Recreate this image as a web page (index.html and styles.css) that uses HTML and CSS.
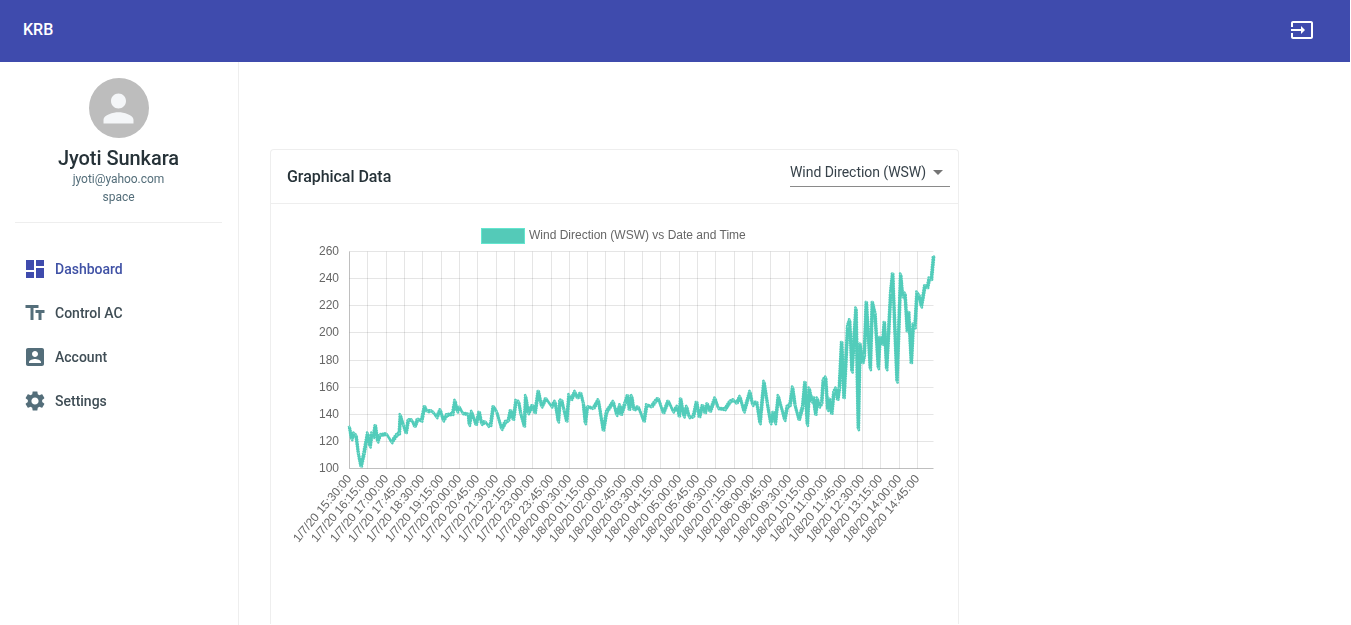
FILE: index.html
```html
<!DOCTYPE html>
<html>

<head lang="en">
    <meta charset="UTF-8">
    <title>KRB</title>
    <link rel="stylesheet" href="styles.css">
</head>

<body>

    <header class="topbar">
        <span class="brand">KRB</span>
        <svg class="topbar-icon" viewBox="0 0 24 24">
            <path d="M21 3.01H3c-1.1 0-2 .9-2 2V9h2V4.99h18v14.03H3V15H1v4.01c0 1.1.9 1.98 2 1.98h18c1.1 0 2-.88 2-1.98v-14c0-1.11-.9-2-2-2zM11 16l4-4-4-4v3H1v2h10v3z" />
        </svg>
    </header>

    <div class="layout">
        <aside class="sidebar">
            <div class="profile">
                <div class="avatar">
                    <svg viewBox="0 0 24 24">
                        <path d="M12 12c2.21 0 4-1.79 4-4s-1.79-4-4-4-4 1.79-4 4 1.79 4 4 4zm0 2c-2.67 0-8 1.34-8 4v2h16v-2c0-2.66-5.33-4-8-4z" />
                    </svg>
                </div>
                <div class="profile-name">Jyoti Sunkara</div>
                <div class="profile-line">jyoti@yahoo.com</div>
                <div class="profile-line">space</div>
            </div>

            <ul class="nav">
                <li class="nav-item nav-active">
                    <svg viewBox="0 0 24 24"><path d="M3 13h8V3H3v10zm0 8h8v-6H3v6zm10 0h8V11h-8v10zm0-18v6h8V3h-8z" /></svg>
                    <span>Dashboard</span>
                </li>
                <li class="nav-item">
                    <svg viewBox="0 0 24 24"><path d="M2.5 4v3h5v12h3V7h5V4h-13zm19 5h-9v3h3v7h3v-7h3V9z" /></svg>
                    <span>Control AC</span>
                </li>
                <li class="nav-item">
                    <svg viewBox="0 0 24 24"><path d="M3 5v14c0 1.1.89 2 2 2h14c1.1 0 2-.9 2-2V5c0-1.1-.9-2-2-2H5c-1.11 0-2 .9-2 2zm12 4c0 1.66-1.34 3-3 3s-3-1.34-3-3 1.34-3 3-3 3 1.34 3 3zm-9 8c0-2 4-3.1 6-3.1s6 1.1 6 3.1v1H6v-1z" /></svg>
                    <span>Account</span>
                </li>
                <li class="nav-item">
                    <svg viewBox="0 0 24 24"><path d="M19.14 12.94c.04-.3.06-.61.06-.94 0-.32-.02-.64-.07-.94l2.03-1.58c.18-.14.23-.41.12-.61l-1.92-3.32c-.12-.22-.37-.29-.59-.22l-2.39.96c-.5-.38-1.03-.7-1.62-.94l-.36-2.54c-.04-.24-.24-.41-.48-.41h-3.84c-.24 0-.43.17-.47.41l-.36 2.54c-.59.24-1.13.57-1.62.94l-2.39-.96c-.22-.08-.47 0-.59.22L2.74 8.87c-.12.21-.08.47.12.61l2.03 1.58c-.05.3-.09.63-.09.94s.02.64.07.94l-2.03 1.58c-.18.14-.23.41-.12.61l1.92 3.32c.12.22.37.29.59.22l2.39-.96c.5.38 1.03.7 1.62.94l.36 2.54c.05.24.24.41.48.41h3.84c.24 0 .44-.17.47-.41l.36-2.54c.59-.24 1.13-.56 1.62-.94l2.39.96c.22.08.47 0 .59-.22l1.92-3.32c.12-.22.07-.47-.12-.61l-2.01-1.58zM12 15.6c-1.98 0-3.6-1.62-3.6-3.6s1.62-3.6 3.6-3.6 3.6 1.62 3.6 3.6-1.62 3.6-3.6 3.6z" /></svg>
                    <span>Settings</span>
                </li>
            </ul>
        </aside>

        <main class="content">
            <section class="card">
                <div class="card-header">
                    <h2 class="card-title">Graphical Data</h2>
                    <div class="select">
                        <span>Wind Direction (WSW)</span>
                        <i class="select-caret"></i>
                    </div>
                </div>
                <div class="card-body">
                    <svg id="chart" class="chart" viewBox="271 204 687 421"></svg>
                </div>
            </section>
        </main>
    </div>

    <script src="chart.js"></script>
</body>

</html>
```
FILE: styles.css
```css
html,
body,
ul,
li,
h2 {
    padding: 0px;
    margin: 0px;
}

html,
body {
    height: 100%;
    overflow: hidden;
    background: #ffffff;
}

body {
    width: 1350px;
    font-family: Roboto, "Liberation Sans", sans-serif;
    color: #263238;
}

.topbar {
    height: 62px;
    background: #3f4bad;
    color: #ffffff;
    display: flex;
    align-items: center;
    justify-content: space-between;
    padding: 0px 36px 0px 23px;
}

.brand {
    font-size: 16px;
    font-weight: 500;
    margin-top: -3px;
}

.topbar-icon {
    width: 24px;
    height: 24px;
    fill: #ffffff;
    margin-top: -2px;
}

.layout {
    display: flex;
    height: 563px;
    will-change: transform;
}

.sidebar {
    width: 207px;
    flex: none;
    border-right: #eeeeee solid 1px;
    padding: 16px 16px 0px 15px;
}

.profile {
    display: flex;
    flex-direction: column;
    align-items: center;
    height: 144px;
    border-bottom: #eeeeee solid 1px;
}

.avatar {
    width: 60px;
    height: 60px;
    border-radius: 30px;
    background: #bdbdbd;
    display: flex;
    align-items: center;
    justify-content: center;
}

.avatar svg {
    width: 45px;
    height: 45px;
    fill: #f4f6f8;
}

.profile-name {
    font-size: 20px;
    font-weight: 500;
    line-height: 24px;
    letter-spacing: -0.06px;
    margin-top: 8px;
}

.profile-line {
    font-size: 12px;
    line-height: 18px;
    letter-spacing: -0.04px;
    color: #546e7a;
}

.nav {
    list-style: none;
    margin-top: 24px;
}

.nav-item {
    display: flex;
    align-items: center;
    height: 44px;
    padding-left: 8px;
    font-size: 14px;
    font-weight: 500;
    color: #3f4d55;
}

.nav-item svg {
    width: 24px;
    height: 24px;
    fill: #546e7a;
    margin-right: 8px;
}

.nav-active {
    color: #3f51a5;
}

.nav-active svg {
    fill: #3f4bad;
}

.content {
    flex: 1;
    padding: 87px 0px 0px 31px;
    min-width: 0;
}

.card {
    width: 687px;
    height: 474px;
    overflow: hidden;
    border: #eeeeee solid 1px;
    border-bottom: none;
    border-radius: 4px 4px 0px 0px;
}

.card-header {
    height: 53px;
    border-bottom: #eeeeee solid 1px;
    display: flex;
    justify-content: space-between;
    padding: 0px 8px 0px 16px;
}

.card-title {
    font-size: 16px;
    font-weight: 500;
    line-height: 53px;
    letter-spacing: -0.05px;
}

.select {
    width: 160px;
    height: 30px;
    margin-top: 7px;
    border-bottom: #8a8a8a solid 1px;
    display: flex;
    align-items: flex-start;
    justify-content: space-between;
    font-size: 14px;
    line-height: 18px;
    letter-spacing: -0.05px;
    color: #37424a;
    padding-top: 6px;
    box-sizing: border-box;
}

.select-caret {
    width: 0px;
    height: 0px;
    margin: 7px 7px 0px 0px;
    border-left: transparent solid 5px;
    border-right: transparent solid 5px;
    border-top: #757575 solid 5px;
}

.chart {
    display: block;
    width: 687px;
    height: 421px;
}

.chart text {
    font-family: "Liberation Sans", Arial, sans-serif;
    font-size: 12px;
    fill: #666666;
}

.grid-line {
    stroke: rgba(0, 0, 0, 0.1);
    stroke-width: 1;
}

.axis-line {
    stroke: rgba(0, 0, 0, 0.25);
    stroke-width: 1;
}

.legend-box {
    fill: #54cab8;
    stroke: #63e6cf;
    stroke-width: 1;
}

.data-line {
    fill: none;
    stroke: #52ccba;
    stroke-width: 2.6;
    stroke-linejoin: round;
}

.data-dot {
    fill: #8fdfd2;
}
```
FILE: chart.js
```js
// chart area, in page pixels
var left = 349.5, right = 933.5, top_ = 251.5, bottom = 468.5;
var stepX = 18.32;

var svg = document.getElementById('chart');
var NS = 'http://www.w3.org/2000/svg';

function add(tag, attrs, text) {
    var el = document.createElementNS(NS, tag);
    for (var k in attrs) {
        el.setAttribute(k, attrs[k]);
    }
    if (text) {
        el.textContent = text;
    }
    svg.appendChild(el);
    return el;
}

// tick labels every 45 minutes
var labels = [];
var mins = 15 * 60 + 30;
for (var i = 0; i < 32; i++) {
    var t = mins + i * 45;
    var day = t >= 1440 ? '1/8/20 ' : '1/7/20 ';
    t = t % 1440;
    var h = Math.floor(t / 60);
    var m = t % 60;
    labels.push(day + (h < 10 ? '0' : '') + h + ':' + (m < 10 ? '0' : '') + m + ':00');
}

// y axis, 100 to 260
for (var v = 100; v <= 260; v += 20) {
    var y = Math.round(bottom - (v - 100) / 160 * (bottom - top_) - 0.5) + 0.5;
    add('line', { x1: left, x2: right, y1: y, y2: y, 'class': v === 100 ? 'axis-line' : 'grid-line' });
    add('text', { x: 339, y: y + 3.5, 'text-anchor': 'end' }, String(v));
}

// x axis
labels.forEach(function (label, i) {
    var x = Math.round(left + i * stepX - 0.5) + 0.5;
    add('line', { x1: x, x2: x, y1: top_, y2: bottom, 'class': i === 0 ? 'axis-line' : 'grid-line' });
    add('text', {
        x: 0, y: 0, 'text-anchor': 'end',
        transform: 'translate(' + (x + 2.5) + ' 479) rotate(-50)'
    }, label);
});

// legend
add('rect', { x: 481.5, y: 228.5, width: 43, height: 15, 'class': 'legend-box' });
add('text', { x: 529, y: 239 }, 'Wind Direction (WSW) vs Date and Time');

// series, read off the plot at 3x: [offset x, offset y, x, y, x, y, ...]
var series = [
    [340, 380, 28, 140, 35, 178, 42, 160, 48, 165, 55, 220, 63, 260, 72, 220, 83, 160, 90, 200, 96, 160, 100, 175, 106, 135,
        113, 185, 120, 165, 140, 162, 155, 187, 170, 165, 178, 160, 181, 105, 190, 135, 198, 160, 205, 120, 215, 120, 224, 140,
        233, 118, 245, 122, 254, 78, 262, 95, 272, 92, 280, 97, 290, 112, 301, 90, 310, 122, 320, 105, 338, 102, 345, 62,
        352, 95, 358, 80, 368, 100, 385, 103, 388, 135, 395, 95, 408, 135, 418, 95, 425, 132, 436, 125, 445, 138, 452, 135,
        460, 78, 470, 95, 485, 147, 497, 125, 505, 122, 512, 90, 520, 120, 528, 62, 536, 65, 542, 100, 553, 140, 557, 48,
        565, 100, 578, 75, 585, 100, 595, 32, 605, 80, 618, 55, 635, 80, 645, 65, 655, 125],
    [560, 370, 0, 92, 5, 90, 12, 120, 20, 155, 27, 75, 33, 90, 45, 65, 52, 85, 62, 68, 70, 100, 76, 160, 82, 110, 100, 115,
        115, 90, 130, 182, 140, 125, 160, 95, 170, 135, 180, 105, 183, 135, 195, 100, 203, 75, 208, 120, 215, 78, 222, 120,
        235, 110, 252, 155, 260, 105, 275, 110, 285, 95, 295, 85, 310, 130, 325, 92, 340, 125, 352, 110, 358, 140, 362, 85,
        372, 140, 380, 110, 388, 142, 400, 140, 410, 95, 418, 142, 428, 105, 435, 130, 442, 100, 450, 125, 465, 85, 475, 115,
        495, 118, 510, 95, 520, 90, 530, 100, 540, 80, 552, 125, 570, 65, 578, 105, 590, 95, 600, 160, 612, 35, 622, 100,
        632, 160, 640, 125, 646, 160, 655, 78],
    [780, 240, 14, 540, 22, 500, 30, 495, 38, 442, 45, 495, 57, 540, 68, 500, 75, 425, 82, 555, 88, 445, 95, 485, 100, 470,
        107, 525, 112, 475, 118, 500, 125, 490, 130, 420, 137, 412, 143, 510, 148, 475, 155, 522, 162, 455, 168, 445, 173, 480,
        178, 445, 185, 305, 192, 475, 203, 260, 209, 240, 216, 395, 228, 205, 235, 568, 240, 310, 248, 370, 253, 345, 259, 185,
        271, 388, 277, 185, 285, 220, 295, 385, 300, 290, 308, 315, 313, 245, 320, 388, 332, 160, 338, 100, 351, 425, 362, 103,
        368, 170, 375, 160, 382, 275, 386, 215, 394, 370, 400, 250, 405, 262, 411, 157, 417, 165, 424, 200, 435, 135, 442, 145,
        448, 115, 454, 120, 461, 47]
];

var traced = [];
series.forEach(function (s) {
    for (var j = 2; j < s.length; j += 2) {
        traced.push([s[0] + s[j] / 3, s[1] + s[j + 1] / 3]);
    }
});

// the real samples are much closer together than the traced peaks,
// so fill in between with a small up and down wobble
var points = [];
var flip = 1;
for (var n = 0; n < traced.length - 1; n++) {
    var a = traced[n], b = traced[n + 1];
    var parts = Math.max(2, Math.round(Math.hypot(b[0] - a[0], b[1] - a[1]) / 1.2));
    for (var p = 0; p < parts; p++) {
        var f = p / parts;
        flip = -flip;
        points.push((a[0] + (b[0] - a[0]) * f + flip * 0.6).toFixed(1) + ',' + (a[1] + (b[1] - a[1]) * f + flip * 0.8).toFixed(1));
    }
}
var last = traced[traced.length - 1];
points.push(last[0].toFixed(1) + ',' + last[1].toFixed(1));

add('polyline', { points: points.join(' '), 'class': 'data-line' });
traced.forEach(function (pt) {
    add('circle', { cx: pt[0].toFixed(1), cy: pt[1].toFixed(1), r: 0.8, 'class': 'data-dot' });
});
```
